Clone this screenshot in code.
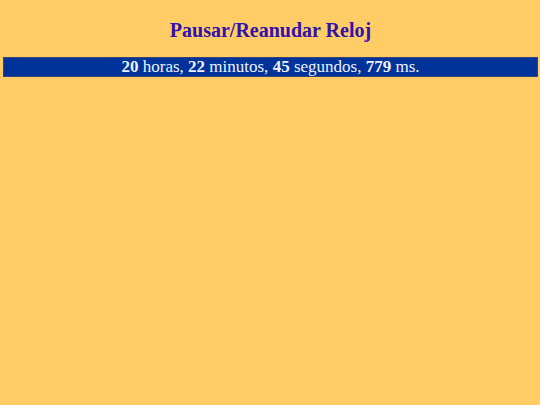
export default function App() {
  return (
    <div className="min-h-[405px] bg-[#ffcc66] pl-[3px] pr-[2px] pt-[17px] font-['Liberation_Serif',serif]">
      <h1 className="text-center text-[20px] font-bold leading-[26px] text-[#3311aa]">
        Pausar/Reanudar Reloj
      </h1>
      <div className="mt-[14px] h-[20px] border border-[#334477] bg-[#003399] text-center text-[17px] leading-[18px] text-[#eef2ff]">
        <b>20</b> horas, <b>22</b> minutos, <b>45</b> segundos, <b>779</b> ms.
      </div>
    </div>
  );
}
